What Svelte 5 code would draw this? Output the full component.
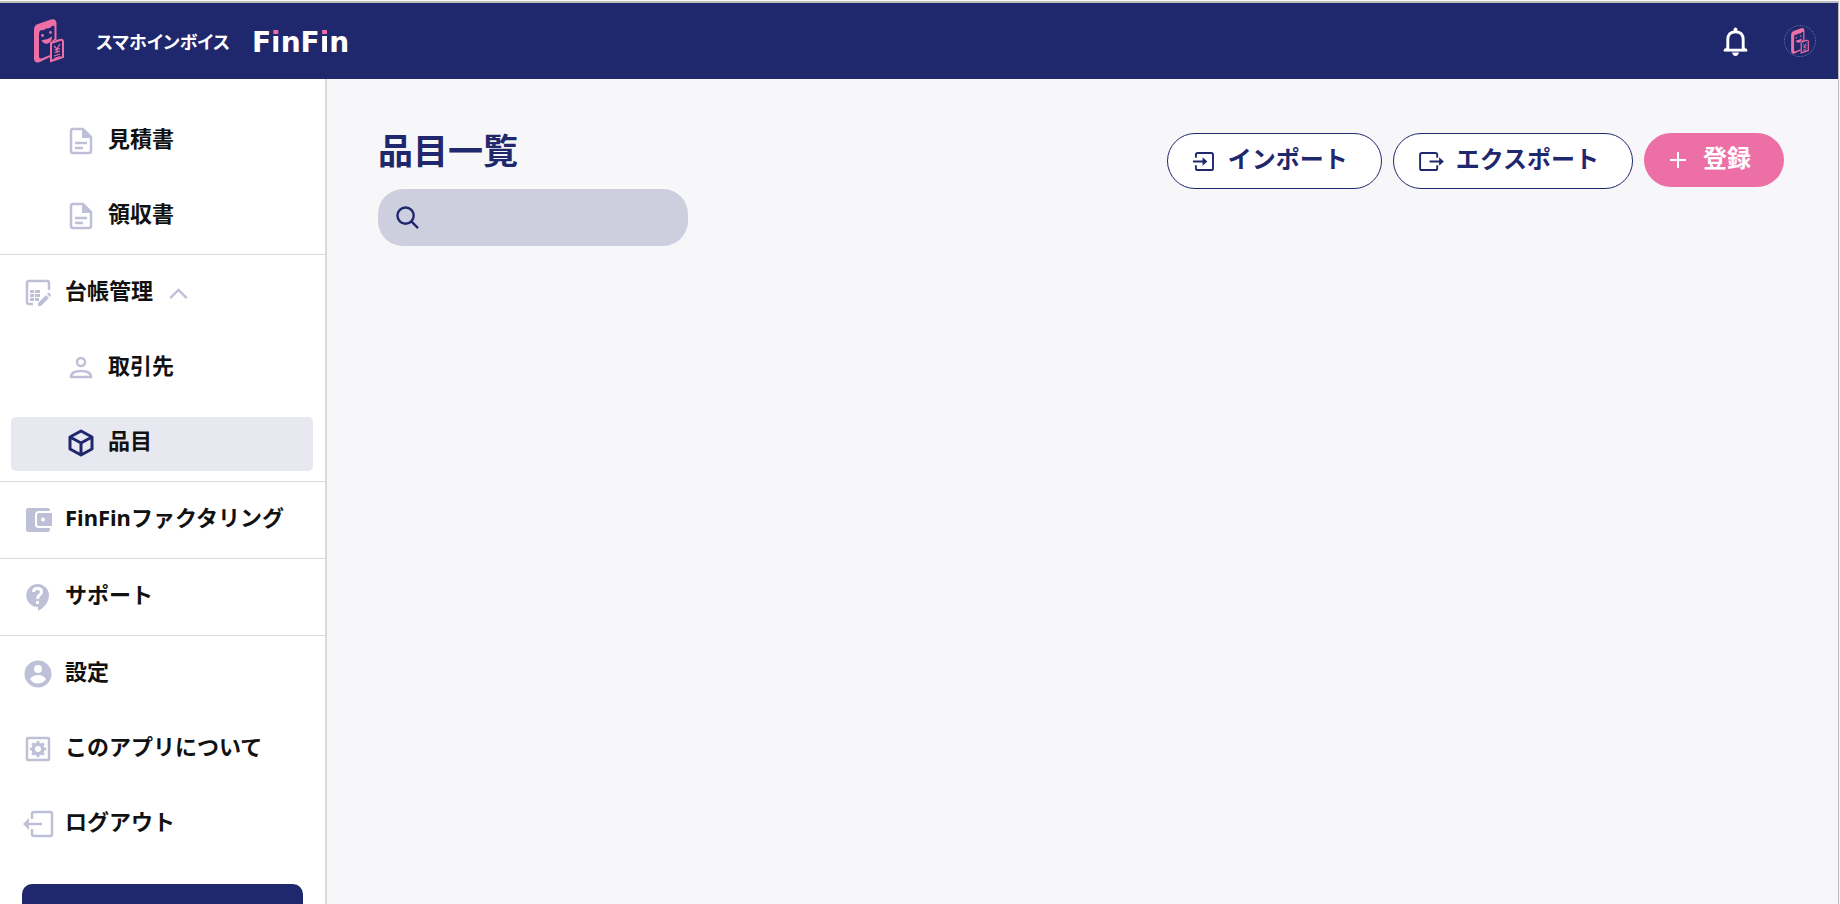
<script>
  let query = $state('');

  const groups = [
    [
      { label: '見積書', icon: 'doc', sub: true },
      { label: '領収書', icon: 'doc', sub: true },
    ],
    [
      { label: '台帳管理', icon: 'ledger', open: true },
      { label: '取引先', icon: 'person', sub: true },
      { label: '品目', icon: 'box', sub: true, active: true },
    ],
    [{ label: 'FinFinファクタリング', icon: 'wallet' }],
    [{ label: 'サポート', icon: 'help' }],
    [
      { label: '設定', icon: 'account' },
      { label: 'このアプリについて', icon: 'gear' },
      { label: 'ログアウト', icon: 'logout' },
    ],
  ];
</script>

{#snippet mascot()}
  <svg class="mascot" viewBox="0 0 30 44" aria-hidden="true">
    <path class="fill" fill-rule="evenodd" d="M0 11Q0 6 4 5L17 .5Q22-1 22.500 4V21L16 23V38L6 43Q0 45 0 39ZM5 15V37.500Q5 40 7.500 39.500L16 36V23L20.500 20V8Q20 5.500 18 7Q16 10 12 9.500Q10 12 7 11Q5 12 5 15Z" />
    <circle class="fill" cx="8.500" cy="16.500" r="1.400" />
    <circle class="fill" cx="16.500" cy="13.500" r="1.400" />
    <path class="fill" d="M7.500 21Q13 21.500 18 17.500Q18 22.500 14 24.500Q10 26 7.500 21Z" />
    <path class="line" d="M17 24L26 21Q29 20 29 23V38L17 42Z" />
    <path class="thin" d="M20 27L23 30L26 25M23 30V34M20.500 31L26 29.500M20.500 33.500L26 32M20 37L26 35M20 39.500L26 37.500" />
  </svg>
{/snippet}

{#snippet icon(name)}
  <svg class="icon" viewBox="0 0 28 28" aria-hidden="true">
    {#if name === 'doc'}
      <path class="line" d="M6 2H16L24 10V24Q24 26 22 26H6Q4 26 4 24V4Q4 2 6 2Z" />
      <path class="fill" d="M15 2L24 11H15Z" />
      <path class="line" d="M8 16H20M8 21H16" />
    {:else if name === 'ledger'}
      <path class="line" d="M9 25H5Q3 25 3 23V4Q3 2 5 2H23Q25 2 25 4V11" />
      <path class="fill" d="M6 11H10V14H6ZM11 11H16V14H11ZM6 15H10V18H6ZM11 15H16V18H11ZM6 19H10V22H6ZM11 19H15V22H11ZM14 24L22 16L25 19L17 27H14ZM23 15L24 14Q25 13.500 26 14.500L27 16L26 18Z" />
    {:else if name === 'person'}
      <circle class="line" cx="14" cy="8" r="4" />
      <path class="line" d="M4 23Q4 17 14 17Q24 17 24 23Z" />
    {:else if name === 'box'}
      <path class="line" d="M14 2L25 8V20L14 26L3 20V8ZM3 8L14 14L25 8M14 14V26" />
    {:else if name === 'wallet'}
      <path class="fill" d="M4 2H24Q26 2 26 5H15Q11 5 11 9V19Q11 22 15 22H26Q26 26 24 26H4Q2 26 2 24V4Q2 2 4 2Z" />
      <path class="fill" fill-rule="evenodd" d="M15 7H28V20H15Q13 20 13 18V9Q13 7 15 7ZM19 11.500A2 2 0 1 0 19 15.500A2 2 0 1 0 19 11.500Z" />
    {:else if name === 'help'}
      <path class="fill" d="M13.500 1A11.500 11.500 0 0 0 14 24V28Q25 22 25 12.500A11.500 11.500 0 0 0 13.500 1Z" />
      <path class="cut" d="M9.500 9Q9.500 5.500 13.500 5.500Q17.500 5.500 17.500 9C17.500 12 13.500 12 13.500 16M13.500 18V21" />
    {:else if name === 'account'}
      <circle class="fill" cx="14" cy="14" r="13.500" />
      <circle class="hole" cx="14" cy="9" r="4" />
      <path class="hole" d="M6 19Q9 15 14 15Q19 15 22 19Q19 23.500 14 23.500Q9 23.500 6 19Z" />
    {:else if name === 'gear'}
      <rect class="line" x="3" y="3" width="22" height="22" rx="1" />
      <circle class="ring" cx="14" cy="14" r="4.800" />
      <circle class="teeth" cx="14" cy="14" r="7" pathLength="64" />
    {:else if name === 'logout'}
      <path class="line" d="M8 9V4Q8 2 10 2H26Q28 2 28 4V24Q28 26 26 26H10Q8 26 8 24V19M4 14H18" />
      <path class="fill" d="M-1 14L5 8V20Z" />
    {/if}
  </svg>
{/snippet}

<div class="app">
  <header>
    <a class="brand" href="#home">
      {@render mascot()}
      <span class="brand-ja">スマホインボイス</span>
      <span class="brand-en">F<span class="dot">i</span>nF<span class="dot">i</span>n</span>
    </a>
    <div class="header-tools">
      <button class="bell" aria-label="お知らせ">
        <svg viewBox="0 0 26 30" aria-hidden="true">
          <path d="M5 24V13Q5 5 13 5Q21 5 21 13V24" />
          <path d="M1 24H25" />
          <path class="solid" d="M11 4V2Q13-1 15 2V4ZM9.500 26.500H16.500Q16 30 13 30Q10 30 9.500 26.500ZM0 25L5 20V25ZM26 25L21 20V25Z" />
        </svg>
      </button>
      <button class="avatar" aria-label="アカウント">{@render mascot()}</button>
    </div>
  </header>

  <div class="body">
    <nav>
      {#each groups as group}
        <ul>
          {#each group as item}
            <li>
              <a href="#menu" class:sub={item.sub} class:active={item.active}>
                {@render icon(item.icon)}
                <span class="label">{item.label}</span>
                {#if item.open}
                  <svg class="chevron" viewBox="0 0 20 12" aria-hidden="true">
                    <path d="M1 11L10 2L19 11" />
                  </svg>
                {/if}
              </a>
            </li>
          {/each}
        </ul>
      {/each}
      <button class="promo" aria-label="プラン"></button>
    </nav>

    <main>
      <div class="heading">
        <h1>品目一覧</h1>
        <label class="search">
          <svg viewBox="0 0 24 24" aria-hidden="true">
            <circle cx="10" cy="10" r="8.500" />
            <path d="M16 16L23 23" />
          </svg>
          <input type="search" aria-label="検索" bind:value={query} />
        </label>
      </div>
      <div class="actions">
        <button class="outline">
          <svg viewBox="0 0 22 20" aria-hidden="true">
            <path d="M3 6V3Q3 1 5 1H19Q21 1 21 3V17Q21 19 19 19H5Q3 19 3 17V14M0 10H12" />
            <path class="solid" d="M10 5.500L15 10L10 14.500Z" />
          </svg>
          <span>インポート</span>
        </button>
        <button class="outline">
          <svg class="wide" viewBox="0 0 26 20" aria-hidden="true">
            <path d="M19 6V3Q19 1 17 1H3Q1 1 1 3V17Q1 19 3 19H17Q19 19 19 17V14M11 10H22" />
            <path class="solid" d="M21 5.500L26 10L21 14.500Z" />
          </svg>
          <span>エクスポート</span>
        </button>
        <button class="primary">
          <svg class="plus" viewBox="0 0 16 16" aria-hidden="true">
            <path d="M8 0V16M0 8H16" />
          </svg>
          <span>登録</span>
        </button>
      </div>
    </main>
  </div>
</div>

<style>
  :global(body) {
    background: #f7f7f9;
    overflow: hidden;
  }

  .app {
    --navy: #1f276d;
    --pink: #ec6fa5;
    --muted: #bec0d8;
    box-sizing: border-box;
    height: calc(100vh - 1px);
    display: flex;
    flex-direction: column;
    border-top: 2px solid #bdbdbd;
    border-right: 1px solid #bdbdbd;
    margin: 1px 1px 0 0;
    font-family: "Noto Sans", "Noto Sans CJK JP", sans-serif;
    color: #111;
  }

  a { color: inherit; text-decoration: none; }
  button { font: inherit; border: 0; padding: 0; cursor: pointer; }
  svg { flex-shrink: 0; overflow: visible; }

  header {
    height: 76px;
    flex-shrink: 0;
    display: flex;
    align-items: center;
    justify-content: space-between;
    padding: 0 22px 0 34px;
    background: var(--navy);
    color: #fff;
  }

  .brand {
    display: flex;
    align-items: center;
  }
  .mascot {
    width: 30px;
    height: 44px;
  }
  .mascot .fill { fill: var(--pink); }
  .mascot .line { fill: var(--navy); stroke: var(--pink); stroke-width: 2; }
  .mascot .thin { fill: none; stroke: var(--pink); stroke-width: 1.2; }
  .brand-ja {
    margin-left: 32px;
    font: 700 18px/32px "Noto Sans CJK JP", sans-serif;
    font-feature-settings: "palt";
  }
  .brand-en {
    margin-left: 22px;
    padding-top: 3px;
    font: 700 28px/32px "DejaVu Sans", sans-serif;
  }
  /* pink tittle, white stem */
  .dot {
    display: inline-block;
    background: linear-gradient(var(--pink) 9px, #fff 9px);
    background-clip: text;
    color: transparent;
  }

  .header-tools {
    display: flex;
    align-items: center;
    gap: 36px;
  }
  .bell {
    display: flex;
    background: transparent;
  }
  .bell svg {
    width: 25px;
    height: 29px;
    fill: none;
    stroke: #fff;
    stroke-width: 3;
  }
  .bell .solid { fill: #fff; stroke: none; }
  .avatar {
    width: 32px;
    height: 32px;
    display: flex;
    align-items: center;
    justify-content: center;
    border: 1px dotted #7378a5;
    border-radius: 50%;
    background: transparent;
  }
  .avatar .mascot { width: 18px; height: 26px; }

  .body {
    flex: 1;
    min-height: 0;
    display: flex;
  }

  nav {
    width: 325px;
    flex-shrink: 0;
    overflow: hidden;
    padding-top: 24px;
    background: #fff;
    border-right: 2px solid #d9d9dd;
  }
  ul {
    margin: 0;
    padding: 12px 11px 10px;
    list-style: none;
    display: flex;
    flex-direction: column;
    gap: 21px;
    border-bottom: 1px solid #dcdcdc;
  }
  ul:last-of-type { border-bottom: 0; }
  nav a {
    box-sizing: border-box;
    height: 54px;
    display: flex;
    align-items: center;
    margin-right: 1px;
    padding: 0 0 2px 13px;
    border-radius: 5px;
    font-size: 22px;
    font-weight: 700;
    line-height: 30px;
  }
  nav a.sub { padding-left: 56px; }
  nav a.active { background: #e8e8f0; }
  .label {
    margin-left: 13px;
    padding-bottom: 6px;
    white-space: nowrap;
  }

  .icon {
    width: 28px;
    height: 28px;
    color: var(--muted);
  }
  .active .icon { color: var(--navy); }
  .icon .fill { fill: currentColor; }
  .icon .line { fill: none; stroke: currentColor; stroke-width: 2.5; }
  .active .icon .line { stroke-width: 3; stroke-linejoin: round; }
  .icon .cut { fill: none; stroke: #fff; stroke-width: 3; }
  .icon .hole { fill: #fff; }
  .icon .ring { fill: none; stroke: currentColor; stroke-width: 3.5; }
  .icon .teeth {
    fill: none;
    stroke: currentColor;
    stroke-width: 2.5;
    stroke-dasharray: 4;
    stroke-dashoffset: 2;
  }
  .chevron {
    width: 19px;
    height: 11px;
    margin-left: 16px;
    fill: none;
    stroke: var(--muted);
    stroke-width: 2.5;
  }

  .promo {
    display: block;
    width: 281px;
    height: 60px;
    margin: 22px 0 0 22px;
    border-radius: 10px;
    background: var(--navy);
  }

  main {
    flex: 1;
    display: flex;
    align-items: flex-start;
    justify-content: space-between;
    padding: 48px 54px 0 51px;
    color: var(--navy);
  }
  h1 {
    margin: 0 0 14px;
    font-size: 35px;
    line-height: 48px;
    font-weight: 700;
  }
  .search {
    box-sizing: border-box;
    width: 310px;
    height: 57px;
    display: flex;
    align-items: center;
    gap: 12px;
    padding: 0 20px 0 18px;
    border-radius: 25px;
    background: #cdcede;
  }
  .search svg {
    width: 23px;
    height: 23px;
    fill: none;
    stroke: var(--navy);
    stroke-width: 2.5;
  }
  .search input {
    flex: 1;
    min-width: 0;
    border: 0;
    outline: 0;
    background: transparent;
    font: inherit;
    font-size: 22px;
    color: inherit;
  }

  .actions {
    display: flex;
    align-items: flex-start;
    gap: 11px;
    padding-top: 6px;
  }
  .actions button {
    height: 56px;
    display: flex;
    align-items: center;
    padding: 0 33px 0 25px;
    border-radius: 28px;
    font-size: 24px;
    font-weight: 700;
    line-height: 32px;
  }
  .actions span { padding-bottom: 4px; }
  .actions svg {
    width: 21px;
    height: 19px;
    margin-right: 14px;
    fill: none;
    stroke: currentColor;
    stroke-width: 2;
  }
  .actions svg.wide { width: 25px; margin-right: 12px; }
  .actions svg.plus { width: 16px; height: 16px; margin-right: 17px; }
  .actions .solid { fill: currentColor; stroke: none; }
  .actions .outline {
    border: 1px solid var(--navy);
    background: #fff;
    color: var(--navy);
  }
  .actions .primary {
    height: 54px;
    padding-left: 26px;
    background: var(--pink);
    color: #fff;
  }
</style>
